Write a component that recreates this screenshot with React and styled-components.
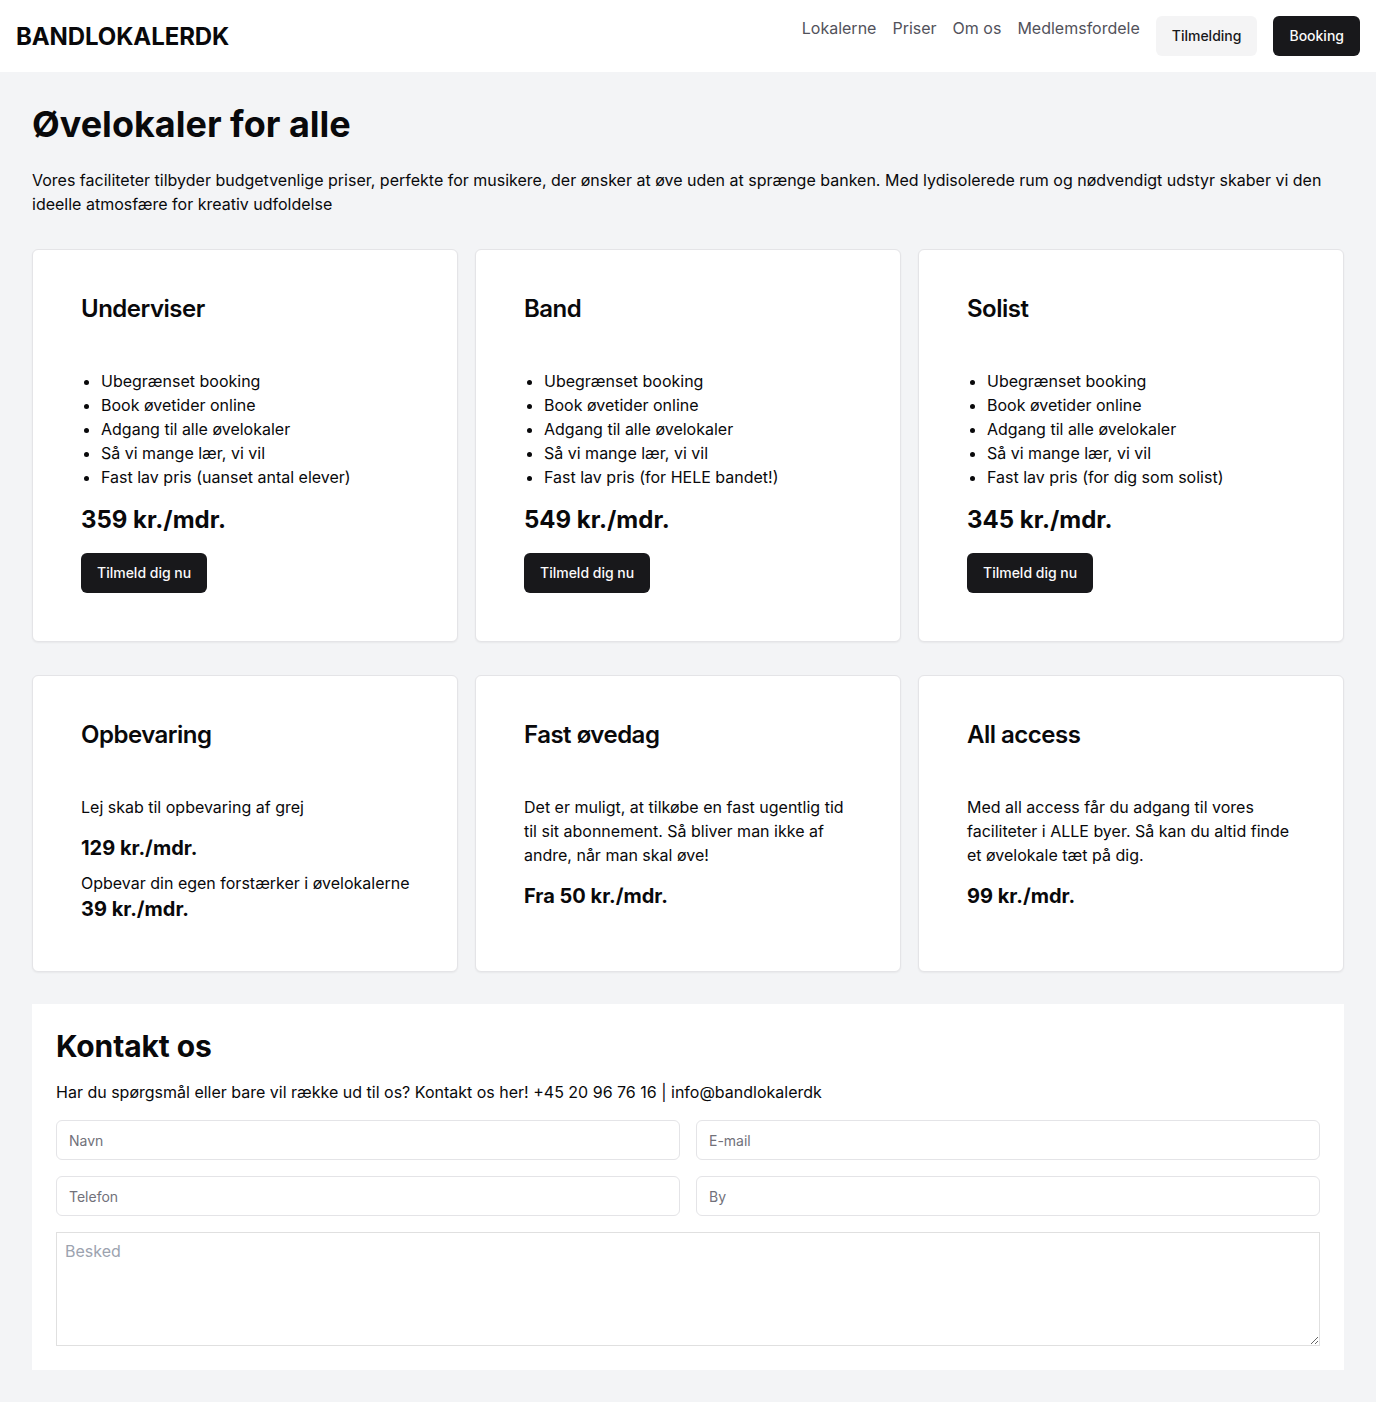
import React from 'react';
import styled, { createGlobalStyle } from 'styled-components';

const GlobalStyle = createGlobalStyle`
  * { box-sizing: border-box; }
  body {
    margin: 0;
    background: #f3f4f6;
    font-family: Inter, "Noto Sans", sans-serif;
    color: #09090b;
  }
`;

const plans = [
  {
    title: 'Underviser',
    perks: ['Ubegrænset booking', 'Book øvetider online', 'Adgang til alle øvelokaler', 'Så vi mange lær, vi vil', 'Fast lav pris (uanset antal elever)'],
    price: '359 kr./mdr.',
  },
  {
    title: 'Band',
    perks: ['Ubegrænset booking', 'Book øvetider online', 'Adgang til alle øvelokaler', 'Så vi mange lær, vi vil', 'Fast lav pris (for HELE bandet!)'],
    price: '549 kr./mdr.',
  },
  {
    title: 'Solist',
    perks: ['Ubegrænset booking', 'Book øvetider online', 'Adgang til alle øvelokaler', 'Så vi mange lær, vi vil', 'Fast lav pris (for dig som solist)'],
    price: '345 kr./mdr.',
  },
];

const App = () => {
  return (
    <>
      <GlobalStyle />
      <Header>
        <Logo>BANDLOKALERDK</Logo>
        <Nav>
          <NavLink>Lokalerne</NavLink>
          <NavLink>Priser</NavLink>
          <NavLink>Om os</NavLink>
          <NavLink>Medlemsfordele</NavLink>
          <Button $variant="light">Tilmelding</Button>
          <Button>Booking</Button>
        </Nav>
      </Header>

      <Main>
        <Title>Øvelokaler for alle</Title>
        <Intro>
          Vores faciliteter tilbyder budgetvenlige priser, perfekte for musikere, der ønsker at øve uden at sprænge banken. Med lydisolerede rum og nødvendigt udstyr skaber vi den ideelle atmosfære for kreativ udfoldelse
        </Intro>

        <CardGrid>
          {plans.map((plan) => (
            <Card key={plan.title}>
              <CardTitle>{plan.title}</CardTitle>
              <Perks>
                {plan.perks.map((p) => <li key={p}>{p}</li>)}
              </Perks>
              <Price>{plan.price}</Price>
              <div>
                <Button>Tilmeld dig nu</Button>
              </div>
            </Card>
          ))}

          <Card>
            <CardTitle>Opbevaring</CardTitle>
            <CardText>Lej skab til opbevaring af grej</CardText>
            <Price $small>129 kr./mdr.</Price>
            <CardText $tight>Opbevar din egen forstærker i øvelokalerne</CardText>
            <Price $small $tight>39 kr./mdr.</Price>
          </Card>

          <Card>
            <CardTitle>Fast øvedag</CardTitle>
            <CardText>Det er muligt, at tilkøbe en fast ugentlig tid til sit abonnement. Så bliver man ikke af andre, når man skal øve!</CardText>
            <Price $small>Fra 50 kr./mdr.</Price>
          </Card>

          <Card>
            <CardTitle>All access</CardTitle>
            <CardText>Med all access får du adgang til vores faciliteter i ALLE byer. Så kan du altid finde et øvelokale tæt på dig.</CardText>
            <Price $small>99 kr./mdr.</Price>
          </Card>
        </CardGrid>

        <Contact>
          <ContactTitle>Kontakt os</ContactTitle>
          <ContactText>Har du spørgsmål eller bare vil række ud til os? Kontakt os her! +45 20 96 76 16 | info@bandlokalerdk</ContactText>
          <Form>
            <Input placeholder="Navn" />
            <Input placeholder="E-mail" />
            <Input placeholder="Telefon" />
            <Input placeholder="By" />
            <Message placeholder="Besked" />
          </Form>
        </Contact>
      </Main>
    </>
  );
};

export default App;

// ----- header
const Header = styled.header`
  height: 72px;
  background: #fff;
  display: flex;
  align-items: center;
  justify-content: space-between;
  padding: 0 16px;
`;
const Logo = styled.div`
  font-size: 24px;
  font-weight: 700;
  letter-spacing: -0.1px;
`;
const Nav = styled.nav`
  display: flex;
  align-items: center;
  gap: 16px;
`;
const NavLink = styled.a`
  font-size: 16px;
  color: #52525b;
  margin-top: -16px;
  cursor: pointer;
`;
const Button = styled.button`
  height: 40px;
  padding: 0 16px;
  border: none;
  border-radius: 6px;
  font-family: inherit;
  font-size: 14px;
  font-weight: 500;
  line-height: 38px;
  background: ${(p) => (p.$variant === 'light' ? '#f4f4f5' : '#18181b')};
  color: ${(p) => (p.$variant === 'light' ? '#18181b' : '#fafafa')};
  cursor: pointer;
`;

// ----- main
const Main = styled.main`
  padding: 32px 32px 32px;
`;
const Title = styled.h1`
  margin: 0;
  font-size: 36px;
  line-height: 40px;
  font-weight: 700;
`;
const Intro = styled.p`
  margin: 24px 0 0;
  font-size: 16px;
  line-height: 24px;
`;

// ----- cards
const CardGrid = styled.div`
  margin-top: 33px;
  display: grid;
  grid-template-columns: repeat(3, 1fr);
  column-gap: 17px;
  row-gap: 33px;
`;
const Card = styled.div`
  background: #fff;
  border: 1px solid #e4e4e7;
  border-radius: 6px;
  box-shadow: 0 1px 2px rgba(0, 0, 0, 0.05);
  padding: 48px 40px 48px 48px;
`;
const CardTitle = styled.h3`
  margin: 0 0 47px;
  font-size: 24px;
  line-height: 22px;
  padding-bottom: 2px;
  font-weight: 600;
  letter-spacing: -0.5px;
`;
const Perks = styled.ul`
  margin: 0;
  padding-left: 20px;
  font-size: 16px;
  line-height: 24px;
`;
const CardText = styled.p`
  margin: ${(p) => (p.$tight ? '9px' : '0')} 0 0;
  font-size: 16px;
  line-height: 24px;
`;
const Price = styled.div`
  margin: ${(p) => (p.$tight ? '0' : '15px')} 0 ${(p) => (p.$small ? '0' : '17px')};
  font-size: ${(p) => (p.$small ? '20px' : '24px')};
  line-height: ${(p) => (p.$small ? '28px' : '32px')};
  font-weight: 700;
`;

// ----- contact
const Contact = styled.section`
  margin-top: 32px;
  background: #fff;
  padding: 24px;
`;
const ContactTitle = styled.h2`
  margin: 0;
  font-size: 30px;
  line-height: 36px;
  font-weight: 700;
  letter-spacing: -0.1px;
`;
const ContactText = styled.p`
  margin: 16px 0 0;
  font-size: 16px;
  line-height: 24px;
`;
const Form = styled.form`
  margin-top: 16px;
  display: grid;
  grid-template-columns: 1fr 1fr;
  gap: 16px;
`;
const Input = styled.input`
  height: 40px;
  border: 1px solid #e4e4e7;
  border-radius: 6px;
  padding: 0 12px;
  font-family: inherit;
  font-size: 14px;
  &::placeholder { color: #71717a; }
`;
const Message = styled.textarea`
  grid-column: span 2;
  height: 114px;
  border: 1px solid #e0e0e0;
  border-radius: 0;
  padding: 8px;
  font-family: inherit;
  font-size: 16px;
  &::placeholder { color: #9ca3af; }
`;
